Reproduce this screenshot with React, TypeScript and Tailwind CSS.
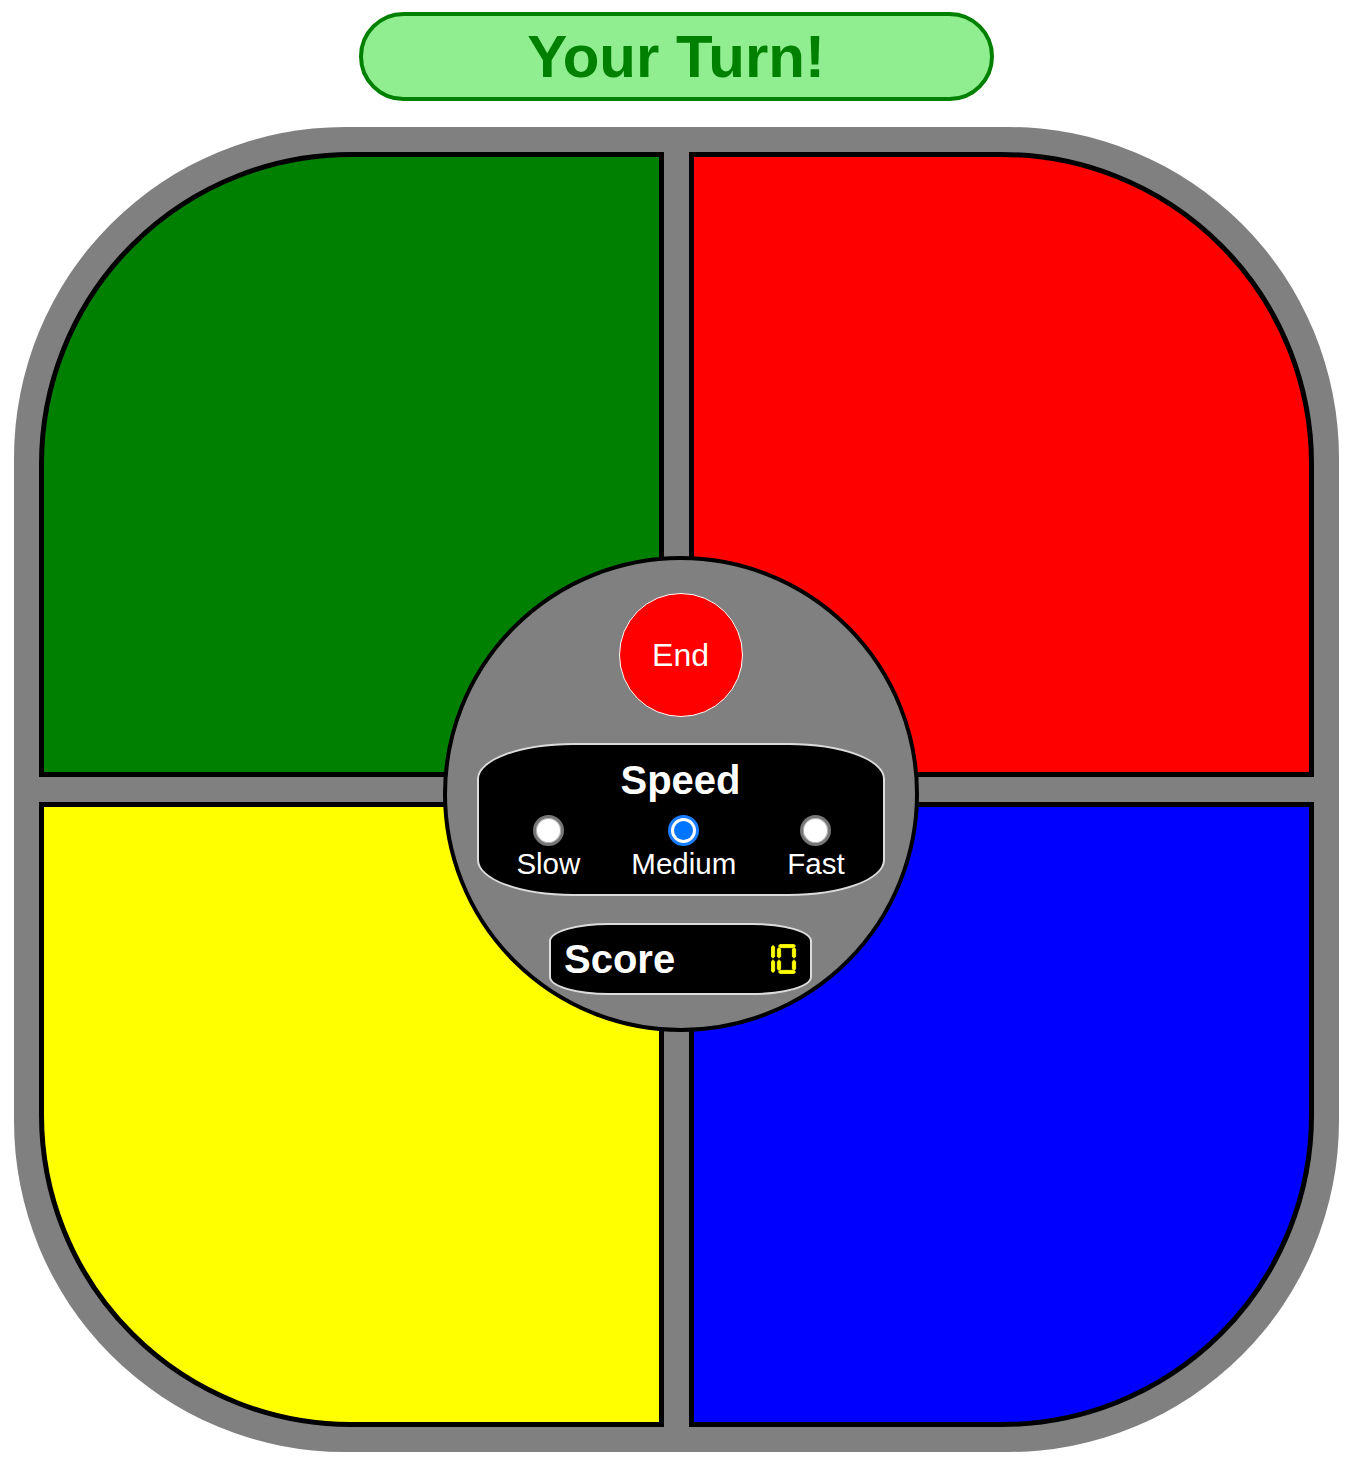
import React from "react";

type Pad = {
  color: string;
  corner: string;
};

const pads: Pad[] = [
  { color: "bg-[#008000]", corner: "rounded-tl-[312px]" },
  { color: "bg-[#ff0000]", corner: "rounded-tr-[312px]" },
  { color: "bg-[#ffff00]", corner: "rounded-bl-[312px]" },
  { color: "bg-[#0000ff]", corner: "rounded-br-[312px]" },
];

const speeds = ["Slow", "Medium", "Fast"];

// vertical 7-seg segment, 4px wide
function vSeg(x: number, a: number, b: number) {
  return `${x + 2},${a} ${x + 4},${a + 2} ${x + 4},${b - 2} ${x + 2},${b} ${x},${b - 2} ${x},${a + 2}`;
}

function hSeg(y: number, a: number, b: number) {
  return `${a},${y + 2} ${a + 2},${y} ${b - 2},${y} ${b},${y + 2} ${b - 2},${y + 4} ${a + 2},${y + 4}`;
}

function ScoreDigits() {
  return (
    <svg width="26" height="30" viewBox="0 0 26 30" className="block">
      <g fill="#ffff00" stroke="#9a9a00" strokeWidth="0.4">
        <polygon points={vSeg(0, 1, 14.5)} />
        <polygon points={vSeg(0, 15.5, 29)} />
        <polygon points={hSeg(0, 7, 25)} />
        <polygon points={vSeg(6, 3, 14.5)} />
        <polygon points={vSeg(6, 15.5, 27)} />
        <polygon points={vSeg(21, 3, 14.5)} />
        <polygon points={vSeg(21, 15.5, 27)} />
        <polygon points={hSeg(26, 7, 25)} />
      </g>
    </svg>
  );
}

function Radio({ checked }: { checked: boolean }) {
  if (checked) {
    return (
      <div className="flex h-[31px] w-[31px] items-center justify-center rounded-full border-[3px] border-[#1a7cff] bg-white">
        <div className="h-[19px] w-[19px] rounded-full bg-[#0075ff]" />
      </div>
    );
  }
  return (
    <div className="h-[31px] w-[31px] rounded-full border-[3px] border-[#767676] bg-white shadow-[inset_0_0_0_1px_#b0b0b0]" />
  );
}

export default function App() {
  return (
    <main className="flex min-h-[1467px] w-full flex-col items-center bg-white pt-[12px] font-['Liberation_Sans',Arial,sans-serif]">
      <div className="flex h-[89px] w-[635px] items-center justify-center rounded-full border-4 border-[#008000] bg-[#90ee90]">
        <h1 className="text-[60px] font-bold leading-none text-[#008000]">
          Your Turn!
        </h1>
      </div>

      <section className="relative mt-[26px] grid h-[1325px] w-[1325px] grid-cols-2 gap-[25px] rounded-[331px] bg-[#808080] p-[25px]">
        {pads.map((pad, i) => (
          <button
            key={i}
            className={`h-[625px] w-[625px] border-[5px] border-black ${pad.color} ${pad.corner}`}
          />
        ))}

        <div className="absolute left-[429px] top-[429px] flex h-[476px] w-[476px] flex-col items-center rounded-full border-4 border-black bg-[#808080] pt-[33px]">
          <button className="flex h-[124px] w-[124px] items-center justify-center rounded-full border border-white bg-[#ff0000] text-[32px] leading-none text-white">
            End
          </button>

          <div className="mt-[26px] flex h-[153px] w-[408px] flex-col items-center rounded-[96px/36px] border-2 border-[#dcdcdc] bg-black pt-[15px] text-white">
            <h2 className="text-[40px] font-bold leading-none">Speed</h2>
            <div className="mt-[15px] flex gap-[51px]">
              {speeds.map((s) => (
                <label key={s} className="flex flex-col items-center">
                  <Radio checked={s === "Medium"} />
                  <span className="mt-[3px] text-[29.5px] leading-none">
                    {s}
                  </span>
                </label>
              ))}
            </div>
          </div>

          <div className="mt-[27px] flex h-[72px] w-[263px] items-center justify-between rounded-[60px/18px] border-2 border-[#dcdcdc] bg-black pl-[13px] pr-[13px]">
            <span className="text-[40px] font-bold leading-none text-white">
              Score
            </span>
            <ScoreDigits />
          </div>
        </div>
      </section>
    </main>
  );
}
